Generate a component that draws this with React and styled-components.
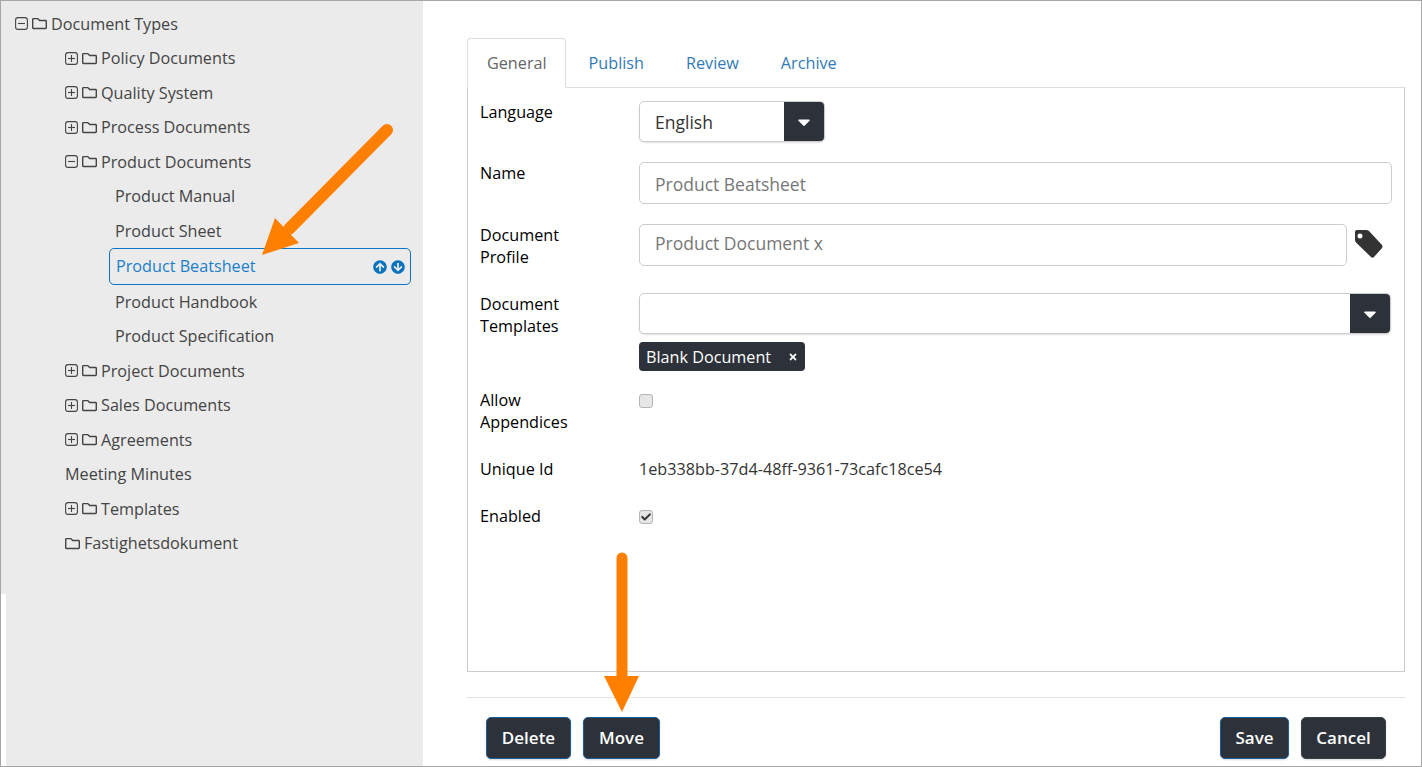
import styled, { createGlobalStyle } from "styled-components";
import { FaRegFolder, FaArrowCircleUp, FaArrowCircleDown, FaCaretDown, FaCheck, FaTimes } from "react-icons/fa";

const GlobalStyle = createGlobalStyle`
  html, body {
    margin: 0;
    padding: 0;
    background: #fff;
  }
  * {
    box-sizing: border-box;
  }
`;

const tree = [
  { level: 0, kind: "minus", folder: true, text: "Document Types" },
  { level: 1, kind: "plus", folder: true, text: "Policy Documents" },
  { level: 1, kind: "plus", folder: true, text: "Quality System" },
  { level: 1, kind: "plus", folder: true, text: "Process Documents" },
  { level: 1, kind: "minus", folder: true, text: "Product Documents" },
  { level: 2, text: "Product Manual" },
  { level: 2, text: "Product Sheet" },
  { level: 2, text: "Product Beatsheet", selected: true },
  { level: 2, text: "Product Handbook" },
  { level: 2, text: "Product Specification" },
  { level: 1, kind: "plus", folder: true, text: "Project Documents" },
  { level: 1, kind: "plus", folder: true, text: "Sales Documents" },
  { level: 1, kind: "plus", folder: true, text: "Agreements" },
  { level: 1, text: "Meeting Minutes" },
  { level: 1, kind: "plus", folder: true, text: "Templates" },
  { level: 1, folder: true, text: "Fastighetsdokument" },
];

const INDENT = [14, 64, 114];

// plus / minus box in the tree
const Expander = ({ kind }) => (
  <ExpanderSvg viewBox="0 0 13 13">
    <rect x="0.6" y="0.6" width="11.8" height="11.8" rx="2.4" fill="none" stroke="#444" strokeWidth="1.1" />
    <path d="M3 6.5h7" stroke="#444" strokeWidth="1.1" />
    {kind === "plus" && <path d="M6.5 3v7" stroke="#444" strokeWidth="1.1" />}
  </ExpanderSvg>
);

const App = () => {
  return (
    <>
      <GlobalStyle />
      <Frame>
        <Sidebar>
          {tree.map((item) =>
            item.selected ? (
              <SelectedRow key={item.text}>
                {item.text}
                <RowActions>
                  <FaArrowCircleUp />
                  <FaArrowCircleDown />
                </RowActions>
              </SelectedRow>
            ) : (
              <TreeRow key={item.text} $indent={INDENT[item.level]}>
                {item.kind && <Expander kind={item.kind} />}
                {item.folder && <FolderIcon />}
                {item.text}
              </TreeRow>
            )
          )}
        </Sidebar>
        <Main>
          <Tabs>
            <Tab $active>General</Tab>
            <Tab>Publish</Tab>
            <Tab>Review</Tab>
            <Tab>Archive</Tab>
          </Tabs>
          <Panel>
            <FormRow>
              <Label>Language</Label>
              <SelectBox $width="186px">
                <SelectValue>English</SelectValue>
                <CaretButton>
                  <FaCaretDown />
                </CaretButton>
              </SelectBox>
            </FormRow>
            <FormRow $top="20px">
              <Label>Name</Label>
              <TextBox>Product Beatsheet</TextBox>
            </FormRow>
            <FormRow $top="20px">
              <Label>Document Profile</Label>
              <InputWithIcon>
                <TextBox $pad="7px">Product Document x</TextBox>
                <TagSvg viewBox="0 0 30 30">
                  <path
                    fillRule="evenodd"
                    d="M3 1H12Q14 1 15 2L28 16Q29 18 28 19L20 28Q18.5 29.5 17 28L2.5 14Q1 12.5 1 11V3Q1 1 3 1ZM6 4.5A2.5 2.5 0 1 0 6 9.5A2.5 2.5 0 1 0 6 4.5Z"
                  />
                </TagSvg>
              </InputWithIcon>
            </FormRow>
            <FormRow $top="25px">
              <Label>Document Templates</Label>
              <div>
                <SelectBox>
                  <SelectValue />
                  <CaretButton>
                    <FaCaretDown />
                  </CaretButton>
                </SelectBox>
                <Chip>
                  Blank Document
                  <FaTimes />
                </Chip>
              </div>
            </FormRow>
            <FormRow $top="18px">
              <Label>Allow Appendices</Label>
              <CheckBox />
            </FormRow>
            <FormRow $top="25px">
              <Label>Unique Id</Label>
              <ValueText>1eb338bb-37d4-48ff-9361-73cafc18ce54</ValueText>
            </FormRow>
            <FormRow $top="25px">
              <Label>Enabled</Label>
              <CheckBox>
                <FaCheck />
              </CheckBox>
            </FormRow>
          </Panel>
          <Footer>
            <ButtonGroup>
              <ActionButton $accent $width={85}>Delete</ActionButton>
              <ActionButton $accent $width={77}>Move</ActionButton>
            </ButtonGroup>
            <ButtonGroup>
              <ActionButton $accent $width={69}>Save</ActionButton>
              <ActionButton $width={85}>Cancel</ActionButton>
            </ButtonGroup>
          </Footer>
        </Main>
        <DiagonalArrow viewBox="0 0 150 150">
          <path d="M133 7L35 106" stroke="#ff8000" strokeWidth="12" strokeLinecap="round" fill="none" />
          <path d="M21 95L45 120L8 132Z" fill="#ff8000" />
        </DiagonalArrow>
        <DownArrow viewBox="0 0 40 162">
          <path d="M19 6V130" stroke="#ff8000" strokeWidth="11" strokeLinecap="round" fill="none" />
          <path d="M1 124H36L19 160Z" fill="#ff8000" />
        </DownArrow>
        <Notch />
      </Frame>
    </>
  );
};

const Frame = styled.div`
  position: relative;
  display: flex;
  width: 1422px;
  height: 767px;
  overflow: hidden;
  border: 1px solid #a6a6a6;
  background: #fff;
  font-family: "Open Sans", "Liberation Sans", sans-serif;
  font-size: 16.2px;
  line-height: 22px;
`;
const Notch = styled.div`
  position: absolute;
  left: 0;
  top: 593px;
  bottom: 0;
  width: 5px;
  background: #fff;
`;
const Sidebar = styled.aside`
  flex: 0 0 422px;
  padding: 5.5px 12px 0 0;
  background: #ebebeb;
`;
const TreeRow = styled.div`
  display: flex;
  align-items: center;
  height: 34.5px;
  padding-left: ${(p) => p.$indent}px;
  color: #444;
`;
const SelectedRow = styled.div`
  display: flex;
  align-items: center;
  justify-content: space-between;
  height: 37px;
  margin: 0 0 -0.5px 108px;
  padding: 0 5px 1px 6px;
  border: 1px solid #0b76c5;
  border-radius: 5px;
  color: #1b7fcc;
`;
const RowActions = styled.span`
  display: flex;
  gap: 4px;
  padding-top: 1px;
  color: #0b72bd;
  font-size: 14px;
`;
const ExpanderSvg = styled.svg`
  flex: none;
  width: 13px;
  height: 13px;
  margin-right: 4px;
`;
const FolderIcon = styled(FaRegFolder)`
  flex: none;
  width: 15px;
  height: 15px;
  margin-right: 4px;
  color: #444;
`;
const Main = styled.main`
  flex: 1;
  padding: 37px 16px 0 44px;
`;
const Tabs = styled.nav`
  display: flex;
  height: 50px;
  border-bottom: 1px solid #ddd;
`;
const Tab = styled.div`
  display: flex;
  align-items: center;
  height: 50px;
  margin-right: ${(p) => (p.$active ? "3px" : "2px")};
  padding: ${(p) => (p.$active ? "0 18px 0 19px" : "0 19px")};
  border: 1px solid ${(p) => (p.$active ? "#ddd" : "transparent")};
  border-bottom-color: ${(p) => (p.$active ? "#fff" : "transparent")};
  border-radius: 4px 4px 0 0;
  background: ${(p) => (p.$active ? "#fff" : "transparent")};
  color: ${(p) => (p.$active ? "#666" : "#337ab7")};
`;
const Panel = styled.section`
  height: 584px;
  padding: 13px 12px 0;
  border: 1px solid #ccc;
  border-top: 0;
`;
const FormRow = styled.div`
  display: grid;
  grid-template-columns: 159px 1fr;
  margin-top: ${(p) => p.$top || "0"};
`;
const Label = styled.div`
  width: 110px;
  color: #000;
`;
const SelectBox = styled.div`
  display: flex;
  width: ${(p) => p.$width || "752px"};
  height: 41px;
  border: 1px solid #ccc;
  border-radius: 5px;
  overflow: hidden;
  box-shadow: 0 1px 2px rgba(0, 0, 0, 0.12);
`;
const SelectValue = styled.div`
  flex: 1;
  padding: 9px 15px;
  color: #333;
  font-size: 17.5px;
`;
const CaretButton = styled.div`
  display: flex;
  flex: 0 0 40px;
  align-items: center;
  justify-content: center;
  background: #2d3139;
  color: #fff;
  font-size: 20px;
`;
const TextBox = styled.div`
  flex: 1;
  height: 42px;
  padding: ${(p) => p.$pad || "10px"} 15px;
  border: 1px solid #ccc;
  border-radius: 5px;
  color: #777;
  font-size: 17.5px;
`;
const InputWithIcon = styled.div`
  display: flex;
  align-items: flex-start;
  gap: 7px;
`;
const TagSvg = styled.svg`
  flex: none;
  width: 30px;
  height: 30px;
  margin: 5px 8px 0 0;
  fill: #333;
`;
const Chip = styled.div`
  display: flex;
  align-items: center;
  justify-content: space-between;
  width: 166px;
  height: 29px;
  margin-top: 8px;
  padding: 0 7px;
  border-radius: 4px;
  background: #2d3139;
  color: #fff;
  svg {
    width: 10px;
    height: 10px;
  }
`;
const CheckBox = styled.div`
  display: flex;
  align-items: center;
  justify-content: center;
  width: 14px;
  height: 14px;
  margin-top: 5px;
  border: 1px solid #b5b5b5;
  border-radius: 3px;
  background: #e6e6e6;
  color: #333;
  font-size: 10px;
`;
const ValueText = styled.div`
  color: #333;
`;
const Footer = styled.footer`
  display: flex;
  justify-content: space-between;
  height: 62px;
  margin-top: 25px;
  padding: 19px 19px 0;
  border-top: 1px solid #e2e2e2;
`;
const ButtonGroup = styled.div`
  display: flex;
  gap: 12px;
`;
const ActionButton = styled.button`
  width: ${(p) => p.$width}px;
  height: 42px;
  padding: 0 0 1px;
  border: 1px solid ${(p) => (p.$accent ? "#1c5e96" : "#3a3e45")};
  border-radius: 5px;
  background: #2d3139;
  color: #fff;
  font: 600 17px "Open Sans", "Liberation Sans", sans-serif;
  box-shadow: 0 1px 2px rgba(0, 0, 0, 0.15);
`;
const DiagonalArrow = styled.svg`
  position: absolute;
  left: 253px;
  top: 122px;
  width: 150px;
  height: 150px;
`;
const DownArrow = styled.svg`
  position: absolute;
  left: 602px;
  top: 551px;
  width: 40px;
  height: 162px;
`;

export default App;
